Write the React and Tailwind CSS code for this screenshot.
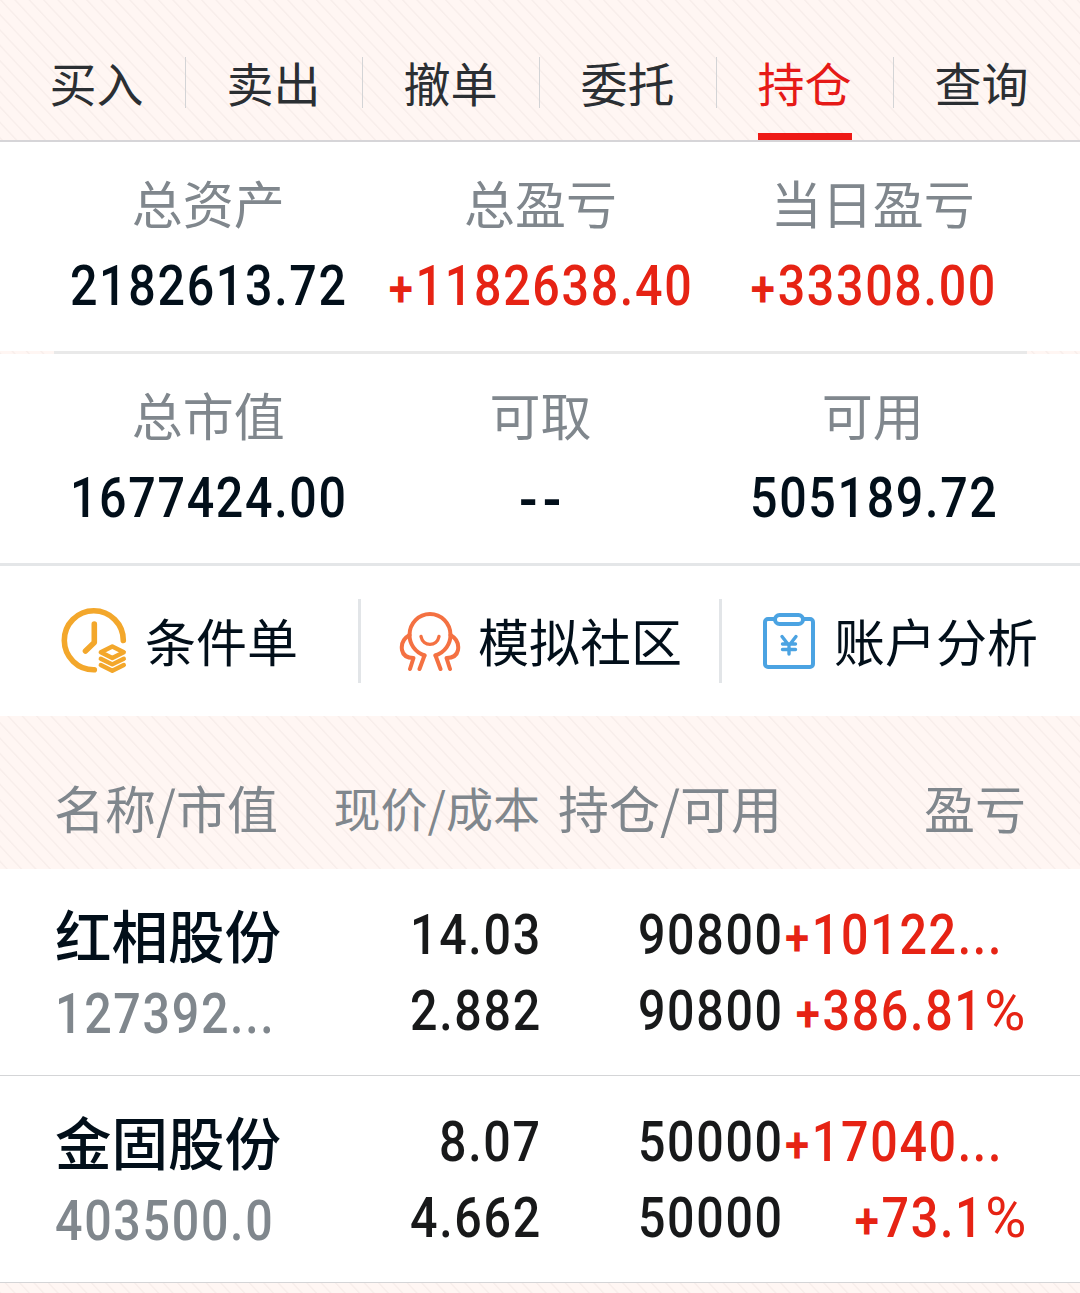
import React from 'react';
import clsx from 'clsx';

const tabs = ['买入', '卖出', '撤单', '委托', '持仓', '查询'];

const summary = [
  [
    { label: '总资产', value: '2182613.72' },
    { label: '总盈亏', value: '+1182638.40', up: true },
    { label: '当日盈亏', value: '+33308.00', up: true },
  ],
  [
    { label: '总市值', value: '1677424.00' },
    { label: '可取', value: '--' },
    { label: '可用', value: '505189.72' },
  ],
];

const holdings = [
  { name: '红相股份', market: '127392...', price: '14.03', cost: '2.882', held: '90800', usable: '90800', profit: '+10122...', rate: '+386.81%' },
  { name: '金固股份', market: '403500.0', price: '8.07', cost: '4.662', held: '50000', usable: '50000', profit: '+17040...', rate: '+73.1%' },
];

const stripes =
  'bg-[#fff6f3] bg-[repeating-linear-gradient(47deg,#f8eeeb_0px,#f8eeeb_0.6px,#fff6f3_1.6px,#fff6f3_9.7px,#f8eeeb_10.5px)]';

// Narrow figures with a smaller, lowered plus sign and a lighter percent sign
function Num({ children, className }) {
  const sign = children.startsWith('+');
  const percent = children.endsWith('%');
  const digits = children.replace('+', '').replace('%', '');
  return (
    <span className={clsx("inline-block h-16 whitespace-nowrap font-['Roboto',sans-serif] text-[55px] leading-[64px] font-[540] tracking-[1.9px] scale-x-[0.88]", className)}>
      {sign && <span className="relative top-px text-[50px] leading-none font-[600] tracking-[3px]">+</span>}
      {digits === '--' ? <span className="relative top-[3px] -mr-1 text-[62px] leading-none tracking-[6px]">--</span> : digits}
      {percent && <span className="ml-0.5 inline-block origin-right scale-x-[1.16] pl-[6px] leading-none font-normal">%</span>}
    </span>
  );
}

function ClockIcon() {
  return (
    <svg width="68" height="68" viewBox="0 0 68 68" fill="none" stroke="#f3a72b" strokeLinecap="round" strokeLinejoin="round">
      <path d="M63.300 33.500A29.500 29.500 0 1 0 34.300 62.800" strokeWidth="5.600" />
      <path d="M34.300 17v18.500L25.500 44" strokeWidth="5.600" />
      <path d="M52.300 39.500L63.800 45.300 52.300 51 40.800 45.300Z" strokeWidth="4.400" />
      <path d="M40.800 51.700L52.300 57.400l11.500-5.700M40.800 58L52.300 63.700l11.500-5.700" strokeWidth="4.400" />
    </svg>
  );
}

function CommunityIcon() {
  return (
    <svg width="62" height="62" viewBox="0 0 62 62" fill="none" stroke="#f47142" strokeWidth="4" strokeLinecap="round" strokeLinejoin="round">
      <path d="M25.500 45.500C16 42 10.500 34 10.500 25a20.500 21 0 0 1 41 0C51.500 34 46 42 36.500 45.500" />
      <path d="M22 26.500c2 10.500 16 10.500 18 0" strokeWidth="3.400" />
      <path d="M10.500 25C4.500 28.500 2 34 3 40c1 5 5 8 11.500 8L11 59M25.500 45.500L20.500 59" />
      <path d="M51.500 25C57.500 28.500 60 34 59 40c-1 5-5 8-11.500 8L51 59M36.500 45.500L41.500 59" />
    </svg>
  );
}

function ReportIcon() {
  return (
    <svg width="52" height="58" viewBox="0 0 52 58" fill="none" stroke="#4ba3e2" strokeWidth="4" strokeLinecap="round" strokeLinejoin="round">
      <path d="M12 7H5a3 3 0 0 0-3 3v42a3 3 0 0 0 3 3h42a3 3 0 0 0 3-3V10a3 3 0 0 0-3-3h-7" />
      <rect x="12" y="3" width="28" height="9" rx="4.500" />
      <path d="M19 24.500l7 9 7-9M26 33.500v8.500M19.500 32h13M19.500 37.500h13" strokeWidth="3.400" />
    </svg>
  );
}

function Summary({ items, className }) {
  return (
    <div className={clsx('grid grid-cols-3 bg-white pr-[41px] pl-[42px]', className)}>
      {items.map(({ label, value, up }) => (
        <div key={label} className="flex flex-col items-center">
          <span className="text-[51px] leading-[64px] text-[#80878d]">{label}</span>
          <Num className={clsx('mt-5 -mr-0.5', up ? 'text-[#e62314]' : 'text-[#020f1a]')}>{value}</Num>
        </div>
      ))}
    </div>
  );
}

function Holding({ item }) {
  return (
    <div className="flex h-[207px] border-b border-[#d4d5d7] bg-white pt-[34px] pl-[55px] text-[#18191a]">
      <div className="-mt-1 flex w-[245px] flex-col items-start">
        <span className="text-[56.5px] leading-[68px] font-medium text-[#020f1a]">{item.name}</span>
        <Num className="mt-[15px] origin-left text-[#80878d]">{item.market}</Num>
      </div>
      <div className="-mr-0.5 flex w-[242px] flex-col items-end">
        <Num className="origin-right">{item.price}</Num>
        <Num className="mt-3 origin-right">{item.cost}</Num>
      </div>
      <div className="-mr-0.5 flex w-[244px] flex-col items-end">
        <Num className="origin-right">{item.held}</Num>
        <Num className="mt-3 origin-right">{item.usable}</Num>
      </div>
      <div className="flex w-[246px] flex-col items-end pl-[3px] text-[#e62314]">
        <Num className="origin-left self-start">{item.profit}</Num>
        <Num className="mt-3 origin-right">{item.rate}</Num>
      </div>
    </div>
  );
}

export default function App() {
  return (
    <div className={clsx("h-[1293px] w-[1080px] overflow-hidden font-['Noto_Sans_CJK_SC',sans-serif]", stripes)}>
      <nav className="flex h-[142px] border-b-2 border-[#d6d5d8] px-[9px]">
        {tabs.map((tab, i) => (
          <div key={tab} className="relative flex w-[177px] justify-center pt-12 pr-0.5">
            <span className={clsx('text-[47px] leading-[68px]', tab === '持仓' ? 'text-[#e61a17]' : 'text-[#2b2f33]')}>{tab}</span>
            {tab === '持仓' && <span className="absolute bottom-0 h-[7px] w-[94px] bg-[#ee1a16]" />}
            {i < tabs.length - 1 && <span className="absolute top-[57px] right-0 h-[51px] w-px bg-[#d3d4d6]" />}
          </div>
        ))}
      </nav>

      <Summary items={summary[0]} className="h-[209px] pt-7" />
      <div className="mr-[53px] ml-[54px] h-[3px] bg-[#e9e9e9]" />
      <Summary items={summary[1]} className="h-[209px] pt-7" />

      <div className="flex h-[153px] items-center border-t-3 border-[#e4e6e8] bg-white text-[51px] text-[#020f1a]">
        <div className="flex h-[84px] w-[361px] items-center border-r-3 border-[#e2e5e8] pl-[60px]">
          <ClockIcon />
          <span className="ml-[17px] pb-[2px]">条件单</span>
        </div>
        <div className="flex h-[84px] w-[361px] items-center border-r-3 border-[#e2e5e8] pl-[38px]">
          <CommunityIcon />
          <span className="ml-[17px] pb-[2px]">模拟社区</span>
        </div>
        <div className="flex items-center pl-[41px]">
          <ReportIcon />
          <span className="ml-[19px] pb-[2px]">账户分析</span>
        </div>
      </div>

      <div className="flex h-[153px] pt-[57px] pl-[54px] text-[51px] leading-[68px] text-[#80878d]">
        <span className="w-[245px]">名称/市值</span>
        <span className="w-[241px] text-right text-[47px]">现价/成本</span>
        <span className="w-[242px] text-right">持仓/可用</span>
        <span className="w-[244px] text-right">盈亏</span>
      </div>

      {holdings.map((item) => (
        <Holding key={item.name} item={item} />
      ))}
    </div>
  );
}
